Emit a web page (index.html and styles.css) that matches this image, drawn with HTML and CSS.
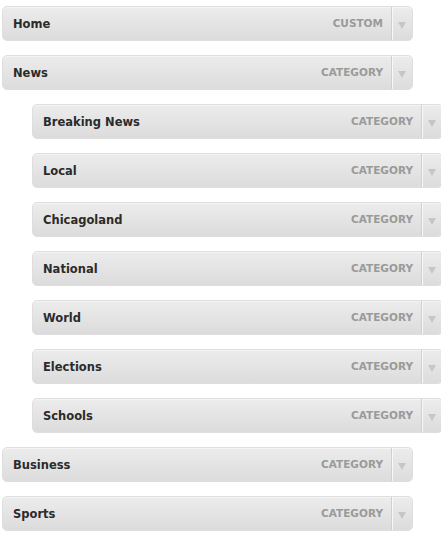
FILE: index.html
```html
<!DOCTYPE html>
<html lang="en">
<head>
    <meta charset="UTF-8">
    <meta name="viewport" content="width=device-width, initial-scale=1.0">
    <title>Menu Structure</title>
    <link rel="stylesheet" href="styles.css">
</head>
<body>
    <!-- Menu items, sub items are indented one level -->
    <ul class="menu">
        <li class="menu-item">
            <div class="item-bar">
                <span class="item-title">Home</span>
                <span class="item-type">Custom</span>
                <span class="item-edit"><span class="arrow"></span></span>
            </div>
        </li>
        <li class="menu-item">
            <div class="item-bar">
                <span class="item-title">News</span>
                <span class="item-type">Category</span>
                <span class="item-edit"><span class="arrow"></span></span>
            </div>
            <ul class="sub-menu">
                <li class="menu-item">
                    <div class="item-bar">
                        <span class="item-title">Breaking News</span>
                        <span class="item-type">Category</span>
                        <span class="item-edit"><span class="arrow"></span></span>
                    </div>
                </li>
                <li class="menu-item">
                    <div class="item-bar">
                        <span class="item-title">Local</span>
                        <span class="item-type">Category</span>
                        <span class="item-edit"><span class="arrow"></span></span>
                    </div>
                </li>
                <li class="menu-item">
                    <div class="item-bar">
                        <span class="item-title">Chicagoland</span>
                        <span class="item-type">Category</span>
                        <span class="item-edit"><span class="arrow"></span></span>
                    </div>
                </li>
                <li class="menu-item">
                    <div class="item-bar">
                        <span class="item-title">National</span>
                        <span class="item-type">Category</span>
                        <span class="item-edit"><span class="arrow"></span></span>
                    </div>
                </li>
                <li class="menu-item">
                    <div class="item-bar">
                        <span class="item-title">World</span>
                        <span class="item-type">Category</span>
                        <span class="item-edit"><span class="arrow"></span></span>
                    </div>
                </li>
                <li class="menu-item">
                    <div class="item-bar">
                        <span class="item-title">Elections</span>
                        <span class="item-type">Category</span>
                        <span class="item-edit"><span class="arrow"></span></span>
                    </div>
                </li>
                <li class="menu-item">
                    <div class="item-bar">
                        <span class="item-title">Schools</span>
                        <span class="item-type">Category</span>
                        <span class="item-edit"><span class="arrow"></span></span>
                    </div>
                </li>
            </ul>
        </li>
        <li class="menu-item">
            <div class="item-bar">
                <span class="item-title">Business</span>
                <span class="item-type">Category</span>
                <span class="item-edit"><span class="arrow"></span></span>
            </div>
        </li>
        <li class="menu-item">
            <div class="item-bar">
                <span class="item-title">Sports</span>
                <span class="item-type">Category</span>
                <span class="item-edit"><span class="arrow"></span></span>
            </div>
        </li>
    </ul>
</body>
</html>
```

FILE: styles.css
```css
/* Page */
body {
    margin: 0;
    padding: 6px 0 0 2px;
    background-color: #ffffff;
    font-family: "DejaVu Sans", "Liberation Sans", sans-serif;
    overflow: hidden;
}
ul {
    list-style: none;
    margin: 0;
    padding: 0;
}
.sub-menu {
    margin-left: 30px;
}

/* One menu item bar */
.menu-item .item-bar {
    display: flex;
    align-items: center;
    width: 409px;
    height: 33px;
    margin-bottom: 14px;
    border: 1px solid #dedede;
    border-radius: 5px;
    background: linear-gradient(#ececec, #dcdcdc);
    box-shadow: inset 0 1px 0 #f4f4f4;
}
.item-title {
    flex: 1;
    padding-left: 10px;
    font-size: 11.5px;
    line-height: 16px;
    font-weight: bold;
    color: #2b2b2b;
}
.item-type {
    padding-right: 8px;
    margin-bottom: 2px;
    font-size: 10.5px;
    line-height: 16px;
    font-weight: bold;
    color: #9a9a9a;
    text-transform: uppercase;
}

/* Toggle at the right end */
.item-edit {
    display: flex;
    align-items: center;
    justify-content: center;
    width: 20px;
    height: 33px;
    border-left: 1px solid #d0d0d0;
    box-shadow: inset 1px 0 0 #f8f8f8;
}
.arrow {
    width: 0;
    height: 0;
    margin-top: 4px;
    border-left: 4px solid transparent;
    border-right: 4px solid transparent;
    border-top: 7px solid #c6c6c6;
}
```
